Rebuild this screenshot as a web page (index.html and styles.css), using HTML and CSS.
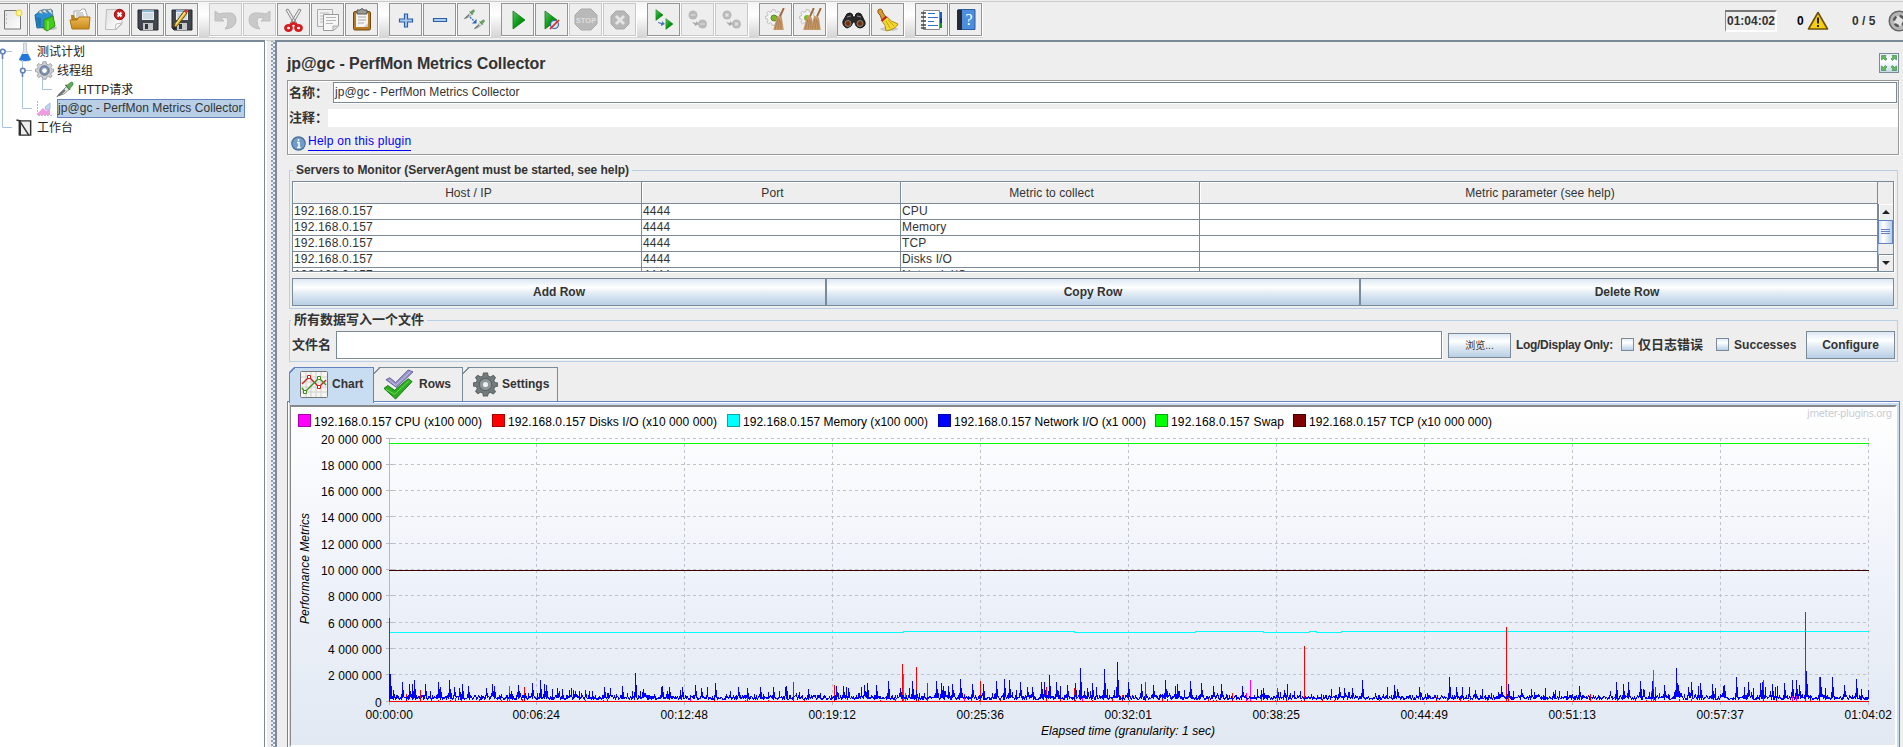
FILE: index.html
```html
<!DOCTYPE html>
<html lang="zh-CN">
<head>
<meta charset="utf-8">
<title>Apache JMeter</title>
<link rel="stylesheet" href="styles.css">
</head>
<body>
<svg class="defs" width="0" height="0">
  <defs>
    <linearGradient id="gGreen" x1="0" y1="0" x2="1" y2="1"><stop offset="0" stop-color="#5fc46a"/><stop offset=".5" stop-color="#0d9a16"/><stop offset="1" stop-color="#056b0b"/></linearGradient>
    <linearGradient id="gFolder" x1="0" y1="0" x2="0" y2="1"><stop offset="0" stop-color="#eebc55"/><stop offset="1" stop-color="#c88a1c"/></linearGradient>
    <linearGradient id="gPaper" x1="0" y1="0" x2="1" y2="1"><stop offset="0" stop-color="#e2e2e2"/><stop offset="1" stop-color="#fff"/></linearGradient>
    <symbol id="floppy" viewBox="0 0 22 22"><path d="M1 1h20v20H3l-2-2z" fill="#41464d" stroke="#24272b"/><path d="M5 1h12v10H5z" fill="#e9f0f5"/><path d="M5 1h12v2H5z" fill="#8db4ce"/><path d="M6 5h10M6 7h10M6 9h10" stroke="#afc3cf"/><path d="M6 14h10v7H6z" fill="#c5c8ca"/><path d="M8 15h3v5H8z" fill="#33373b"/></symbol>
    <symbol id="gear" viewBox="0 0 24 24"><path d="M10 1h4l.6 3 2.2.9L19.500 3.200l2 2.300-1.600 2.400 1 2.100 2.700.6v3l-2.800.7-.9 2.200 1.600 2.300-2.200 2.200-2.400-1.600-2.200 1L14 23h-4l-.6-2.800-2.200-1-2.400 1.600-2.200-2.200 1.600-2.400L3.200 14l-2.800-.6v-3l2.800-.6.9-2.100-1.600-2.400 2.100-2.100 2.500 1.500L9.400 4z"/></symbol>
    <symbol id="dropper" viewBox="0 0 20 18"><path d="M3 15.500l4-4.500 5-5 3 3-6 5z" fill="#dcebe8" stroke="#8b9291"/><path d="M1 17.500l3-4 6-5 1 2-5 4.500z" fill="#707675"/><path d="M11 4l5 5" stroke="#4f6a4b" stroke-width="1.600"/><path d="M12 5l5-4q3 0 2 3l-4 5z" fill="#62ab5b" stroke="#3b7a38" stroke-width=".6"/></symbol>
    <symbol id="broom" viewBox="0 0 12 24"><path d="M11 0L7 9" stroke="#9b6b3d" stroke-width="2"/><path d="M4 8l5 2 2 13H0z" fill="#c79a68"/><path d="M5 11L2 22M6.500 12l-1.500 10M8 13v9" stroke="#a0744a" stroke-width=".8"/></symbol>
    <symbol id="run" viewBox="0 0 14 20"><path d="M1 1l12 9L1 19z" fill="url(#gGreen)" stroke="#0a7a12" stroke-width=".8"/></symbol>
  </defs>
</svg>

<header class="toolbar">
  <div class="tools">
    <div class="group">
      <button class="tb"><svg viewBox="0 0 33 33"><path d="M9.500 7.500h16v18.500h-16z" fill="url(#gPaper)" stroke="#777"/><path d="M11 12h1M11 16h1M11 20h1" stroke="#999"/><circle cx="24" cy="10" r="2.800" fill="#fff7a0" stroke="#ecd855" stroke-width="1.300"/></svg></button>
      <button class="tb"><svg viewBox="0 0 33 33"><ellipse cx="20" cy="25" rx="8" ry="2" fill="#bbb"/><path d="M6 12l7-5 10 0 1 8-4 9-12 1z" fill="#2b8fd0" stroke="#22628f"/><path d="M9 9l3-2 2 4M13 8l3-2 3 5M18 7l4-1 2 6" fill="#d9e2e5" stroke="#7f8c90"/><path d="M7 14l5 1v10l-4-3z" fill="#1f78b4"/><path d="M15 17l9-4 2 10-8 5-3-2z" fill="#44cb1c" stroke="#2a9010"/><path d="M19 18v9" stroke="#9cf06f"/></svg></button>
      <button class="tb"><svg viewBox="0 0 33 33"><path d="M11 8h6l2-2h3l4 12H11z" fill="#fafafa" stroke="#aaa"/><path d="M13 10h7M13 12h8M13 14h9" stroke="#aaa"/><path d="M8 12h3l1 3h14v9H9z" fill="#ba7f1e"/><path d="M7 17h7l2-3h11l-1 12H9z" fill="url(#gFolder)" stroke="#a87316"/></svg></button>
      <button class="tb"><svg viewBox="0 0 33 33"><path d="M9.500 6.500H25V21l-6 5.500H8.500z" fill="url(#gPaper)" stroke="#bdbdbd"/><path d="M18 27l1-6 6-1z" fill="#fff" stroke="#bbb"/><circle cx="22.500" cy="11.500" r="5.200" fill="#ce1d1d" stroke="#920f0f"/><path d="M20.500 9.500l4 4m0-4l-4 4" stroke="#fff" stroke-width="2"/></svg></button>
      <button class="tb"><svg viewBox="0 0 33 33"><use href="#floppy" x="6" y="6" width="22" height="22"/></svg></button>
      <button class="tb"><svg viewBox="0 0 33 33"><use href="#floppy" x="6" y="6" width="22" height="22"/><path d="M8 26l2-5.500L19 8l3 2-9.500 12.500z" fill="#f2bd2c" stroke="#5e4310"/><path d="M19 8l1.500-2 3 2-1.500 2z" fill="#d33"/><path d="M11 21L20 9" stroke="#fff09a"/><path d="M8 27l1-4 3 2z" fill="#222"/></svg></button>
    </div>
    <div class="group">
      <button class="tb off"><svg viewBox="0 0 33 33"><path d="M6 8v10h9l-3-3q7-2 7 3t-3 8q11-1 11-9t-9-7q-5 0-8 1z" fill="#c9c9c9" stroke="#bdbdbd"/></svg></button>
      <button class="tb off"><svg viewBox="0 0 33 33"><path d="M27 8v10h-9l3-3q-7-2-7 3t3 8Q6 25 6 17t9-7q5 0 8 1z" fill="#c9c9c9" stroke="#bdbdbd"/></svg></button>
      <button class="tb"><svg viewBox="0 0 33 33"><path d="M9 7l2-1 8.500 14-2.500 1zM24 7l-2-1-8.500 14 2.500 1z" fill="#ececec" stroke="#888"/><g fill="none" stroke="#d31d20" stroke-width="2.800"><ellipse cx="11.500" cy="25" rx="3" ry="2.600"/><ellipse cx="21.500" cy="25" rx="3" ry="2.600"/><path d="M13 22l3.500-2 3.500 2"/></g></svg></button>
      <button class="tb"><svg viewBox="0 0 33 33"><path d="M6.500 6.500h15v17h-15z" fill="#f1f1f1" stroke="#aaa"/><path d="M9 10h9M9 13h3M9 16h3M9 19h3" stroke="#bbb"/><path d="M12.500 11.500h15V23l-5 4.500h-10z" fill="#f7f7f7" stroke="#999"/><path d="M15 14.500h10M15 17.500h10M15 20.500h7" stroke="#b5b5b5"/><path d="M22 27v-4h5" fill="#ddd" stroke="#aaa"/></svg></button>
      <button class="tb"><svg viewBox="0 0 33 33"><rect x="8.500" y="8.500" width="17" height="18.500" rx="1.500" fill="#b77a22" stroke="#75490d"/><path d="M11 10h12v14l-12 0z" fill="#f4f4f4"/><path d="M13 14h8M13 17h8M13 20h6" stroke="#aaa"/><path d="M12 7h3q2-3 4 0h3v4H12z" fill="#9a9b96" stroke="#555650"/><path d="M19 24l4-4v4z" fill="#ccc"/></svg></button>
    </div>
    <div class="group">
      <button class="tb"><svg viewBox="0 0 33 33"><path d="M15.500 11h3v5h5v3h-5v5h-3v-5h-5v-3h5z" fill="#a9cbf0" stroke="#2d5fa6" stroke-width="1.200"/></svg></button>
      <button class="tb"><svg viewBox="0 0 33 33"><path d="M10.500 15.500h13v3h-13z" fill="#a9cbf0" stroke="#2d5fa6" stroke-width="1.200"/></svg></button>
      <button class="tb"><svg viewBox="0 0 33 33"><use href="#dropper" x="6" y="6" width="12" height="11"/><use href="#dropper" x="16" y="16" width="12" height="11"/><path d="M13 14l4 4" stroke="#3674c4" stroke-width="1.400" stroke-dasharray="2 1"/><path d="M19.500 16v4.500H15z" fill="#2864bb"/></svg></button>
    </div>
    <div class="group">
      <button class="tb"><svg viewBox="0 0 33 33"><use href="#run" x="11" y="7" width="14" height="20"/></svg></button>
      <button class="tb"><svg viewBox="0 0 33 33"><use href="#run" x="9" y="7" width="14" height="20"/><circle cx="19.500" cy="21.500" r="4" fill="#d9e7f4" stroke="#3d68a4" stroke-width="1.200"/><path d="M15 26l9-9" stroke="#df2525" stroke-width="1.700"/></svg></button>
      <button class="tb off"><svg viewBox="0 0 33 33"><path d="M12 6h10l6 6v9l-6 6H12l-6-6v-9z" fill="#b9b9b9" stroke="#aaa"/><text x="17" y="20" text-anchor="middle" class="stop-text">STOP</text></svg></button>
      <button class="tb off"><svg viewBox="0 0 33 33"><path d="M13 8h8l5 5v8l-5 5h-8l-5-5v-8z" fill="#b7b7b7" stroke="#aaa"/><path d="M13 13l8 8m0-8l-8 8" stroke="#e5e5e5" stroke-width="3"/></svg></button>
    </div>
    <div class="group">
      <button class="tb"><svg viewBox="0 0 33 33"><use href="#run" x="8" y="6" width="9" height="12"/><use href="#run" x="18" y="15" width="9" height="12"/><path d="M11 19l4 1v-2l3 3-4 2v-2l-3-1z" fill="#4774b5"/></svg></button>
      <button class="tb off"><svg viewBox="0 0 33 33"><circle cx="12" cy="12" r="4.500" fill="#b9b9b9"/><circle cx="21.500" cy="21" r="4.500" fill="#b9b9b9"/><path d="M9.500 12h5M19 21h5" stroke="#d5d5d5" stroke-width="1.500"/><path d="M11 19l4 1v-2l3 3-4 2v-1z" fill="#aaa"/></svg></button>
      <button class="tb off"><svg viewBox="0 0 33 33"><circle cx="12" cy="12" r="4.500" fill="#b9b9b9"/><circle cx="21.500" cy="21" r="4.500" fill="#b9b9b9"/><path d="M10.500 10.500l3 3m0-3l-3 3M20 19.500l3 3m0-3l-3 3" stroke="#e3e3e3" stroke-width="1.500"/><path d="M11 19l4 1v-2l3 3-4 2v-1z" fill="#aaa"/></svg></button>
    </div>
    <div class="group">
      <button class="tb"><svg viewBox="0 0 33 33"><use href="#gear" x="6" y="6" width="17" height="17" fill="#f4f4f4" stroke="#aaa"/><circle cx="15" cy="15" r="3" fill="#79b927" stroke="#5e8a28"/><use href="#broom" x="14" y="5" width="12" height="23"/></svg></button>
      <button class="tb"><svg viewBox="0 0 33 33"><use href="#gear" x="6" y="6" width="17" height="17" fill="#f4f4f4" stroke="#aaa"/><circle cx="14" cy="15" r="3" fill="#79b927"/><use href="#broom" x="10" y="5" width="12" height="23"/><use href="#broom" x="17" y="5" width="12" height="23"/></svg></button>
    </div>
    <div class="group">
      <button class="tb"><svg viewBox="0 0 33 33"><path d="M10 11q3-2 5 0l1 3h2l1-3q2-2 5 0l4 8q1 5-5 6-5-1-5-6h-2q-1 5-6 6-5-2-4-7z" fill="#292929" stroke="#111"/><path d="M10 14l4-1M20 13l4 1" stroke="#888"/><circle cx="11" cy="20.500" r="3" fill="#75320d" stroke="#999" stroke-width=".8"/><circle cx="23" cy="20.500" r="3" fill="#75320d" stroke="#999" stroke-width=".8"/></svg></button>
      <button class="tb"><svg viewBox="0 0 33 33"><ellipse cx="18" cy="26" rx="9" ry="2" fill="#c9c9c9"/><path d="M7 7q4-3 5 3l3 4-4 3-2-5q-3-2-2-5z" fill="#d99a35" stroke="#8c5a12"/><path d="M16 14q4 5 11 7-2 5-12 7 0-6-4-10z" fill="#f2d72e" stroke="#ad8e10"/><path d="M10.500 18l5-4.500" stroke="#c4201a" stroke-width="2.200"/><path d="M15 18l4 7M17 17l6 6" stroke="#c5a61b"/></svg></button>
    </div>
    <div class="group">
      <button class="tb"><svg viewBox="0 0 33 33"><path d="M8.500 7.500h16v19h-16z" fill="#fff" stroke="#888"/><path d="M6 10h5M6 14h5M6 18h5M6 22h5M6 25h5" stroke="#444" stroke-width="1.300"/><path d="M13 10.500h7M13 14.500h10M13 18.500h6M13 22.500h10" stroke="#2f70c8"/><path d="M25 9h2v6h-2z" fill="#1461c8"/><path d="M25 15h2v5h-2z" fill="#0c3d88"/><path d="M25 20h2v5h-2z" fill="#119322"/></svg></button>
      <button class="tb"><svg viewBox="0 0 33 33"><path d="M9 6.500h17v20H9z" fill="#4c8ddd" stroke="#2c5c9e"/><path d="M8 7h5v20H8z" fill="#262b33"/><text x="20" y="22" text-anchor="middle" class="help-text">?</text></svg></button>
    </div>
  </div>
  <div class="status">
    <span class="timer">01:04:02</span>
    <span class="warn">0</span>
    <svg class="warn-icon" viewBox="0 0 22 20"><path d="M11 1.500L20.500 18h-19z" fill="#f7cf0c" stroke="#6d5200" stroke-width="1.600" stroke-linejoin="round"/><path d="M11 6.500v6" stroke="#222" stroke-width="2"/><path d="M11 14v2" stroke="#222" stroke-width="2"/></svg>
    <span class="threads">0 / 5</span>
    <svg class="idle-icon" viewBox="0 0 22 22"><circle cx="11" cy="11" r="9.800" fill="#b5b5b5" stroke="#666" stroke-width="1.500"/><circle cx="11" cy="11" r="5" fill="#e4e4e4" stroke="#555" stroke-width="2.500" stroke-dasharray="4.500 3.350"/></svg>
  </div>
</header>

<main class="work">
  <nav class="tree">
    <svg class="lines" viewBox="0 0 60 100" width="60" height="100"><g fill="none" stroke="#a9c4e2"><path d="M2.500 12v73.500H12M6 9.500h6M22.500 18v48.500H32M26 28.500h6M42.500 37v10.500H52"/></g><g fill="#fff" stroke="#5f80b8" stroke-width="1.600"><path d="M2.500 12v5M22.500 31v4"/><circle cx="2.800" cy="9.500" r="2.300"/><circle cx="22.800" cy="28.500" r="2.300"/></g></svg>
    <div class="node n1"><svg viewBox="0 0 16 20"><path d="M6.500 1h3v8l4 8q0 2-2 2h-7q-2 0-2-2l4-8z" fill="#dfe5ec" stroke="#c3c8ce"/><path d="M5 12h6l3 6q-6 2-12 0z" fill="#2177dc"/></svg><span>测试计划</span></div>
    <div class="node n2"><svg viewBox="0 0 24 24"><use href="#gear" width="24" height="24" fill="#cfd1d4" stroke="#8c8f94"/><circle cx="12" cy="12" r="6" fill="#7f95b4" stroke="#4f6384"/><circle cx="12" cy="12" r="3" fill="#fff"/></svg><span>线程组</span></div>
    <div class="node n3"><svg viewBox="0 0 20 18"><use href="#dropper" width="20" height="18"/></svg><span>HTTP请求</span></div>
    <div class="node n4"><svg viewBox="0 0 16 16"><path d="M1.500 0v14.500H16" fill="none" stroke="#bbb" stroke-dasharray="2 1"/><path d="M2 14v-2l5-5 3 3 4-2v6z" fill="#ee9be0"/><path d="M9 6l5-4v6l-4 1z" fill="#c5d3f2" stroke="#a9bbe2"/></svg><span class="selected">jp@gc - PerfMon Metrics Collector</span></div>
    <div class="node n5"><svg viewBox="0 0 17 19"><path d="M3 2h12v15H3z" fill="#eee" stroke="#2d2d2d" stroke-width="1.500"/><path d="M0 1l4 1v15M4 3l9 14" stroke="#333" fill="none" stroke-width="1.600"/></svg><span>工作台</span></div>
  </nav>
  <div class="divider"></div>

  <section class="panel">
    <div class="title-row"><h1>jp@gc - PerfMon Metrics Collector</h1>
      <button class="expand"><svg viewBox="0 0 18 18" fill="#67b765" stroke="#2f8937" stroke-width=".6"><path d="M1.500 1.500h4.500L5 3l2 2-1.500 1.500-2-2L1.500 6zM16.500 1.500h-4.500L13 3l-2 2 1.500 1.500 2-2L16.500 6zM1.500 16.500h4.500L5 15l2-2-1.500-1.500-2 2L1.500 12zM16.500 16.500h-4.500L13 15l-2-2 1.500-1.500 2 2L16.500 12z"/></svg></button></div>

    <div class="namebox">
      <div class="name-row"><label>名称：</label><div class="field">jp@gc - PerfMon Metrics Collector</div></div>
      <div class="comment-row"><label>注释：</label><div class="plain"></div></div>
      <div class="help-row"><svg viewBox="0 0 15 15"><circle cx="7.500" cy="7.500" r="6.700" fill="#6f9cc9" stroke="#476f9c" stroke-width="1.200"/><path d="M7.500 3v2M6 6.500h2v5M6 11.500h3.500" stroke="#fff" stroke-width="1.500" fill="none"/></svg><a>Help on this plugin</a></div>
    </div>

    <fieldset class="servers">
      <legend>Servers to Monitor (ServerAgent must be started, see help)</legend>
      <div class="grid-wrap">
        <div class="grid">
          <div class="hd">Host / IP</div><div class="hd">Port</div><div class="hd">Metric to collect</div><div class="hd">Metric parameter (see help)</div>
          <div>192.168.0.157</div><div>4444</div><div>CPU</div><div></div>
          <div>192.168.0.157</div><div>4444</div><div>Memory</div><div></div>
          <div>192.168.0.157</div><div>4444</div><div>TCP</div><div></div>
          <div>192.168.0.157</div><div>4444</div><div>Disks I/O</div><div></div>
          <div>192.168.0.157</div><div>4444</div><div>Network I/O</div><div></div>
        </div>
        <div class="scroll">
          <div class="corner"></div>
          <div class="arrow"><svg viewBox="0 0 8 4"><path d="M0 4l4-4 4 4z"/></svg></div>
          <div class="thumb"><i></i><i></i><i></i></div>
          <div class="track"></div>
          <div class="arrow"><svg viewBox="0 0 8 4"><path d="M0 0l4 4 4-4z"/></svg></div>
        </div>
      </div>
      <div class="row-buttons"><button class="metal">Add Row</button><button class="metal">Copy Row</button><button class="metal">Delete Row</button></div>
    </fieldset>

    <fieldset class="file">
      <legend>所有数据写入一个文件</legend>
      <div class="file-row">
        <label class="fname">文件名</label><div class="path"></div>
        <button class="metal browse">浏览...</button>
        <span class="logonly">Log/Display Only:</span>
        <i class="check"></i><span class="errs">仅日志错误</span>
        <i class="check"></i><span class="succ">Successes</span>
        <button class="metal configure">Configure</button>
      </div>
    </fieldset>

    <div class="tabs">
      <div class="tab active"><svg class="i-chart" viewBox="0 0 28 27"><rect x=".5" y=".5" width="27" height="26" rx="1" fill="#f5f5f3" stroke="#777"/><path d="M6 1v25M11 1v25M16 1v25M21 1v25M1 6h26M1 11h26M1 16h26M1 21h26" stroke="#d0d0cc"/><path d="M2 13l7-7 10 10 7-7" fill="none" stroke="#c72020" stroke-width="1.400"/><path d="M2 17l3 4L19 7l7 7" fill="none" stroke="#3f8c17" stroke-width="1.400"/><g fill="#fff"><path d="M7.500 4.500h3v3h-3zM17.500 14.500h3v3h-3z" stroke="#c72020"/><path d="M3.500 19.500h3v3h-3zM17.500 5.500h3v3h-3z" stroke="#3f8c17"/></g></svg><span>Chart</span></div>
      <div class="tab"><svg class="i-rows" viewBox="0 0 32 32"><path d="M1 20l4-3 7 5L26 10l4 3-17 18z" fill="#2cac20" stroke="#187b12"/><path d="M3 21l9 5L27 12" fill="none" stroke="#70d95d"/><path d="M3 11l4-2 6 5L26 1l5 2-17 16z" fill="#9794c8" stroke="#67639b"/><path d="M6 11l7 6L28 3" fill="none" stroke="#c3c1e5"/></svg><span>Rows</span></div>
      <div class="tab"><svg class="i-set" viewBox="0 0 24 24"><use href="#gear" width="24" height="24" fill="#737b7c" stroke="#5b6364"/><circle cx="12" cy="12" r="6" fill="#8f9696" stroke="#596262"/><circle cx="12" cy="12" r="2.500" fill="#eee"/></svg><span>Settings</span></div>
    </div>

    <div class="chart-frame">
      <svg id="chart" viewBox="291 406 1604 338" width="1604" height="338"></svg>
    </div>
  </section>
</main>
<script src="chart.js"></script>
</body>
</html>
```

FILE: styles.css
```css
* { box-sizing: border-box; }
body { margin: 0; width: 1903px; height: 747px; overflow: hidden; background: #eee; color: #333; font: 12px/14px "Liberation Sans", Arial, "Noto Sans CJK SC", sans-serif; display: flex; flex-direction: column; }
button { font: inherit; color: inherit; padding: 0; margin: 0; }
.defs { position: absolute; }

.toolbar { height: 40px; flex: none; display: flex; justify-content: space-between; box-shadow: inset 0 1px #eee, inset 0 2px #ccc; background: #eee; }
.tools { display: flex; gap: 10px; margin-top: 2px; padding-top: 1px; height: 36px; background: linear-gradient(#f4f4f4, #fff 35%, #d3d3d3); margin-left: -5px; }
.group { display: flex; gap: 1px; height: 34px; background: #fff; padding-right: 1px; }
.tb { width: 33px; height: 33px; background: #eee; border: 1px solid #949494; display: block; }
.tb svg { width: 33px; height: 33px; margin: -1px; display: block; }
.tb.off { border-color: #c8c8c8; }
.stop-text { font: bold 7.500px "Liberation Sans", sans-serif; fill: #ddd; }
.help-text { font: 16px "Liberation Serif", serif; fill: #fff; }
.status { display: flex; align-items: flex-start; font-weight: bold; width: 178px; }
.status > * { flex: none; }
.timer { margin-top: 10px; width: 52px; height: 22px; border-style: solid; border-width: 2px 2px 2px 1px; border-color: #777 #fff #fff #888; padding: 2px 0 0 1px; font-size: 12px; line-height: 15px; white-space: nowrap; }
.warn { margin: 14px 0 0 20px; color: #000; width: 10px; }
.warn-icon { width: 22px; height: 20px; margin-top: 11px; }
.threads { margin: 14px 0 0 23px; width: 36px; white-space: nowrap; }
.idle-icon { width: 22px; height: 22px; margin-top: 10px; }

.work { flex: 1; display: flex; min-height: 0; }
.tree { width: 265px; background: #fff; border-top: 2px solid #7a8a99; border-right: 1px solid #7a8a99; position: relative; flex: none; }
.lines { position: absolute; left: 0; top: 0; }
.node { display: flex; align-items: center; height: 19px; color: #222; white-space: nowrap; }
.node span { line-height: 18px; }
.n1 { padding-left: 17px; } .n1 svg { width: 16px; height: 20px; margin-right: 4px; }
.n2 { padding-left: 35px; } .n2 svg { width: 19px; height: 19px; margin-right: 3px; }
.n3 { padding-left: 55px; } .n3 svg { width: 19px; height: 17px; margin-right: 4px; }
.n4 { padding-left: 36px; } .n4 svg { width: 16px; height: 16px; margin-right: 5px; }
.n5 { padding-left: 16px; } .n5 svg { width: 17px; height: 18px; margin-right: 4px; }
.node .selected { border: 1px solid #6382bf; background: #b8cfe5; height: 19px; line-height: 16px; width: 188px; letter-spacing: .05px; color: #333; }
.divider { width: 10px; flex: none; border-top: 1px solid #ccc; background: radial-gradient(circle at 1px 1px, #8ea0b4 .8px, transparent 1px) 4px 3px / 4px 4px repeat-y, radial-gradient(circle at 1px 1px, #8ea0b4 .8px, transparent 1px) 6px 5px / 4px 4px repeat-y, #eee; border-left: 2px solid #fff; }

.panel { flex: 1; border-top: 2px solid #7a8a99; border-left: 2px solid #7a8a99; padding-left: 10px; display: flex; flex-direction: column; min-width: 0; }
.title-row { display: flex; justify-content: space-between; height: 38px; flex: none; }
h1 { margin: 12px 0 0; font-size: 16px; line-height: 20px; letter-spacing: -.08px; }
.expand { width: 20px; height: 20px; margin: 11px 4px 0 0; border: 1px solid #7a8a99; background: linear-gradient(#e4edf6, #fff 40%, #c5d8ea); }
.expand svg { width: 18px; height: 18px; display: block; }
.namebox { width: 1612px; height: 75px; flex: none; border: 1px solid #999; box-shadow: 1px 1px #fff, inset 1px 1px #fff; padding: 1px 0 0 1px; }
.namebox label { font-weight: bold; font-size: 13px; flex: none; }
.name-row { display: flex; height: 22px; align-items: flex-start; }
.name-row label { width: 44px; line-height: 22px; }
.field { width: 1564px; height: 21px; border: 1px solid #7a8a99; background: #fff; padding: 2px 1px; box-shadow: 0 1px #fff; letter-spacing: .05px; }
.comment-row { display: flex; height: 18px; align-items: center; margin-top: 5px; }
.comment-row label { width: 39px; }
.plain { flex: 1; height: 18px; background: #fff; }
.help-row { display: flex; margin-top: 6px; padding-left: 2px; }
.help-row svg { width: 15px; height: 15px; margin: 3px 2px 0 0; }
.help-row a { color: #00f; border-bottom: 1px solid #00f; height: 18px; line-height: 17px; letter-spacing: .24px; }

fieldset { margin: 0; border: 1px solid #b8cfe5; padding: 0; min-width: 0; flex: none; width: 1609px; }
legend { font-weight: bold; line-height: 14px; padding: 0 3px; margin-left: 3px; }
.servers { margin: 8px 0 0 2px; height: 146px; }
.servers legend { letter-spacing: -.055px; }
.grid-wrap { display: flex; margin: 4px 0 0 2px; width: 1602px; height: 91px; border: 1px solid #7a8a99; box-shadow: 1px 1px #fff; overflow: hidden; }
.grid { display: grid; grid-template-columns: 349px 259px 299px 678px; grid-template-rows: 22px repeat(5, 16px); width: 1585px; height: 89px; overflow: hidden; }
.grid div { background: #fff; border-right: 1px solid #7a8a99; border-bottom: 1px solid #7a8a99; padding-left: 1px; line-height: 15px; letter-spacing: .16px; }
.grid .hd { background: #eee; text-align: center; line-height: 22px; box-shadow: inset 1px 1px #fff; padding-left: 3px; letter-spacing: .08px; }
.scroll { width: 15px; display: flex; flex-direction: column; }
.corner { height: 22px; }
.arrow { height: 16px; flex: none; display: flex; align-items: center; justify-content: center; border-left: 1px solid #7a8a99; box-shadow: inset 1px 1px #fff; }
.arrow svg { width: 8px; height: 4px; fill: #222; }
.thumb { height: 25px; border: 1px solid #6382bf; background: linear-gradient(90deg, #d5e3f2, #fff 35%, #b8cfe5); display: flex; flex-direction: column; align-items: center; justify-content: center; gap: 1px; }
.thumb i { width: 9px; height: 1px; background: #6382bf; }
.track { height: 11px; border-left: 1px solid #b8cfe5; border-bottom: 1px solid #7a8a99; }
.metal { border: 1px solid #7a8a99; background: linear-gradient(#dde8f3, #fff 32%, #e2ebf4 55%, #b8cfe5); font-weight: bold; }
.row-buttons { display: flex; margin: 6px 0 0 2px; width: 1602px; }
.row-buttons .metal { flex: 1; height: 28px; }
.file { height: 50px; margin: 3px 0 0 2px; }
.file legend { font-size: 13px; margin-left: 1px; line-height: 16px; }
.file-row { display: flex; align-items: center; height: 29px; margin-top: 2px; padding-left: 2px; font-weight: bold; white-space: nowrap; }
.file-row > * { flex: none; }
.fname, .errs { font-size: 13px; }
.fname { width: 44px; }
.path { width: 1106px; height: 28px; background: #fff; border: 1px solid #7a8a99; box-shadow: 1px 1px #fff; }
.browse { width: 63px; height: 25px; margin: 2px 5px 0 6px; font-weight: normal; font-size: 10px; }
.logonly { width: 105px; letter-spacing: -.3px; }
.check { width: 13px; height: 13px; border: 1px solid #7a8a99; background: linear-gradient(#e4edf6, #fff 35%, #b8cfe5); }
.errs { width: 82px; padding-left: 4px; }
.succ { width: 77px; padding-left: 5px; letter-spacing: .05px; }
.configure { width: 89px; height: 28px; }

.tabs { display: flex; height: 34px; margin: 5px 0 0 2px; flex: none; font-weight: bold; }
.tab { display: flex; align-items: center; border: 1px solid #7a8a99; border-left: 0; border-bottom: 0; clip-path: polygon(5px 0, 100% 0, 100% 100%, 0 100%, 0 5px); background: linear-gradient(135deg, #eee 3px, #7a8a99 3.500px, #7a8a99 4.200px, transparent 4.800px); }
.tab span { padding-bottom: 2px; }
.tab.active { width: 85px; height: 36px; margin-bottom: -2px; padding-bottom: 2px; position: relative; border: 1px solid #6382bf; border-bottom: 0; background: linear-gradient(135deg, #6382bf 3.500px, #c8ddf2 4px); padding-left: 10px; }
.tab:nth-child(2) { width: 89px; padding-left: 9px; }
.tab:nth-child(3) { width: 95px; padding-left: 10px; }
.i-chart { width: 28px; height: 27px; margin-right: 4px; }
.i-rows { width: 31px; height: 31px; margin-right: 5px; }
.i-set { width: 25px; height: 25px; margin-right: 4px; }
.chart-frame { width: 1613px; flex: none; height: 349px; border: 1px solid #6382bf; border-right: 1px solid #7a8a99; background: #c8ddf2; padding: 3px 3px 0 2px; box-shadow: inset 1px 1px #fff; }
#chart { display: block; box-sizing: content-box; border: 1px solid #888; border-top-width: 2px; border-right: 2px solid #fff; border-bottom: 2px solid #fff; background: linear-gradient(#fff, #edf1f9 55%, #e2e9f3); font: 12px "Liberation Sans", Arial, sans-serif; }
.axis-title { font-style: italic; }
.watermark { font: 10px "DejaVu Sans", sans-serif; fill: #c9ccd2; }
```

FILE: chart.js
```js
const svg = document.getElementById('chart');
const NS = 'http://www.w3.org/2000/svg';

function add(tag, attrs, text) {
  const el = document.createElementNS(NS, tag);
  for (const k in attrs) el.setAttribute(k, attrs[k]);
  if (text !== undefined) el.textContent = text;
  svg.appendChild(el);
  return el;
}
function line(d, color, extra) {
  add('path', Object.assign({ d, fill: 'none', stroke: color, 'shape-rendering': 'crispEdges' }, extra));
}

const LEFT = 389.5, BASE = 700.5;
const rowsY = [437.5, 463.5, 489.5, 515.5, 542.5, 568.5, 594.5, 621.5, 647.5, 673.5, 700.5];
const times = ['00:00:00', '00:06:24', '00:12:48', '00:19:12', '00:25:36', '00:32:01', '00:38:25', '00:44:49', '00:51:13', '00:57:37', '01:04:02'];

// Legend
[[298, 314, 168, '#f0f', '#a0a', '192.168.0.157 CPU (x100 000)'],
 [492, 508, 209, '#f00', '#a00', '192.168.0.157 Disks I/O (x10 000 000)'],
 [727, 743, 185, '#0ff', '#0aa', '192.168.0.157 Memory (x100 000)'],
 [938, 954, 192, '#00f', '#00a', '192.168.0.157 Network I/O (x1 000)'],
 [1155, 1171, 113, '#0f0', '#0a0', '192.168.0.157 Swap'],
 [1293, 1309, 183, '#800000', '#400000', '192.168.0.157 TCP (x10 000 000)']
].forEach(([x, tx, w, c, b, t]) => {
  add('rect', { x: x + .5, y: 413.5, width: 12, height: 12, fill: c, stroke: b });
  add('text', { x: tx, y: 425, textLength: w }, t);
});
add('text', { x: 1807, y: 416, textLength: 85, class: 'watermark' }, 'jmeter-plugins.org');

// Grid and axes
rowsY.forEach((y, i) => {
  line(`M386 ${y}h7`, '#b6bac6');
  line(`M393 ${y}H1869`, '#c0c3ce', { 'stroke-dasharray': '3 3' });
  const v = 20 - i * 2;
  const w = v === 0 ? 7 : v >= 10 ? 61 : 54;
  add('text', { x: 382 - w, y: y + 5, textLength: w }, v === 0 ? '0' : v + ' 000 000');
});
times.forEach((t, i) => {
  const x = Math.floor(389 + i * 147.93) + .5;
  line(`M${x} 437V700`, i ? '#c0c3ce' : '#b6bac6', i ? { 'stroke-dasharray': '3 3' } : {});
  line(`M${x} 700v4`, '#b6bac6');
  add('text', { x: x - 24, y: 718, textLength: 47.500 }, t);
});
add('text', { x: 1041, y: 734, textLength: 174, class: 'axis-title' }, 'Elapsed time (granularity: 1 sec)');
add('text', { x: 0, y: 0, textLength: 111, class: 'axis-title', transform: 'translate(309 623) rotate(-90)' }, 'Performance Metrics');

// Peaks as [x, top]; each list was sampled at its own scale
const place = (x0, sx, y0, pts) => pts.map(([x, y]) => [x0 + x / sx, y0 + y / 3]);
const blue = [
  ...place(280, 2.8, 400, [[309,820],[343,843],[362,850],[372,850],[376,838],[408,849],[443,842],[449,858],[475,838],[488,858],[502,860],[510,850],[528,856],[578,862],[595,850],[601,855],[647,870],[669,852],[708,847],[730,838],[741,850],[746,853],[778,862],[821,868],[826,869],[856,867],[908,858],[959,855],[995,816],[1019,864],[1071,855],[1090,858],[1128,858],[1164,852],[1180,860],[1219,847],[1284,858],[1308,862],[1346,858],[1383,858],[1414,858],[1418,854],[1559,856]]),
  ...place(830, 2.904, 560, [[18,376],[40,376],[55,380],[100,372],[110,366],[134,372],[170,360],[205,380],[239,360],[251,388],[310,360],[323,366],[330,374],[344,376],[355,368],[378,354],[413,368],[447,370],[483,360],[506,354],[521,357],[552,363],[573,378],[588,378],[615,362],[622,364],[637,342],[657,363],[690,372],[712,366],[727,320],[749,380],[762,366],[797,324],[834,303],[868,362],[905,370],[940,372],[975,357],[1010,370],[1046,360],[1080,366],[1114,376],[1136,370],[1198,375],[1259,381],[1319,386],[1480,378],[1494,381],[1516,382],[1546,357]]),
  ...place(1360, 2.888, 560, [[99,372],[171,378],[259,348],[278,378],[334,387],[408,375],[428,370],[466,384],[560,392],[633,375],[740,363],[760,370],[775,363],[810,360],[845,360],[879,372],[913,321],[920,372],[950,378],[957,363],[983,366],[1018,370],[1052,372],[1087,348],[1122,363],[1157,366],[1162,363],[1191,370],[1226,366],[1250,357],[1260,357],[1270,372],[1289,330],[1329,348],[1364,348],[1399,372],[1433,354]])
];
const red = [
  ...place(280, 2.8, 400, [[307,652],[354,880],[393,867],[490,890],[636,890],[685,858],[1310,885],[1438,843],[1552,852]]),
  ...place(830, 2.904, 560, [[13,372],[211,309],[251,318],[283,366],[437,360],[628,378],[668,402],[711,380],[850,402],[916,363],[1100,412],[1168,396],[1252,398],[1300,381],[1378,255]]),
  ...place(1360, 2.888, 560, [[424,198],[221,408],[430,405],[667,400],[853,378],[1165,357],[1287,153],[1327,348]])
];
const magenta = [
  ...place(280, 2.8, 400, [[642,855],[1150,890]]),
  ...place(830, 2.904, 560, [[213,340],[220,395],[390,400],[410,400],[733,405],[1209,396],[1221,357]]),
  ...place(1360, 2.888, 560, [[367,408],[847,327],[842,390],[1250,390],[1262,395]])
];

let seed = 20177;
function rnd() {
  seed = (seed * 1103515245 + 12345) % 2147483648;
  return seed / 2147483648;
}

line('M389 442.5H1869', '#0f0');
line('M389 569.5H1869', '#400000');
line('M389 631.5H903V630.5H1074V631.5H1195V630.5H1263V631.5H1309V630.5H1316V631.5H1341V630.5H1869', '#0ff');

const spike = color => ([x, y]) => {
  const px = Math.floor(x) + .5;
  line(`M${px} ${BASE}V${Math.round(y)}`, color);
};
magenta.forEach(spike('#f0f'));
red.forEach(spike('#f00'));
for (let i = 0; i < 60; i++) spike('#f00')([LEFT + rnd() * 1478, 698 + rnd() * 2]);

// Network I/O: low background noise with the listed peaks over it
const tops = new Map();
blue.forEach(([x, y]) => {
  const px = Math.floor(x);
  tops.set(px + 1, Math.round((y + 696) / 2));
  tops.set(px, Math.round(y));
});
let d = 'M389.5 700L389.5 673';
for (let x = 390; x <= 1868; x++) {
  const r = rnd();
  let top = 698 - r * 5;
  if (r > .84) top = 694 - rnd() * rnd() * 12;
  if (tops.has(x)) top = tops.get(x);
  const low = Math.min(699.500, Math.max(top + 1, 695 + rnd() * 4));
  d += `L${x}.5 ${top.toFixed(1)}L${x}.8 ${low.toFixed(1)}`;
}
add('path', { d, fill: 'none', stroke: '#00f', 'stroke-width': 1, 'stroke-linejoin': 'bevel', 'shape-rendering': 'crispEdges' });
line('M389 700.5H1869', '#f00');
```
